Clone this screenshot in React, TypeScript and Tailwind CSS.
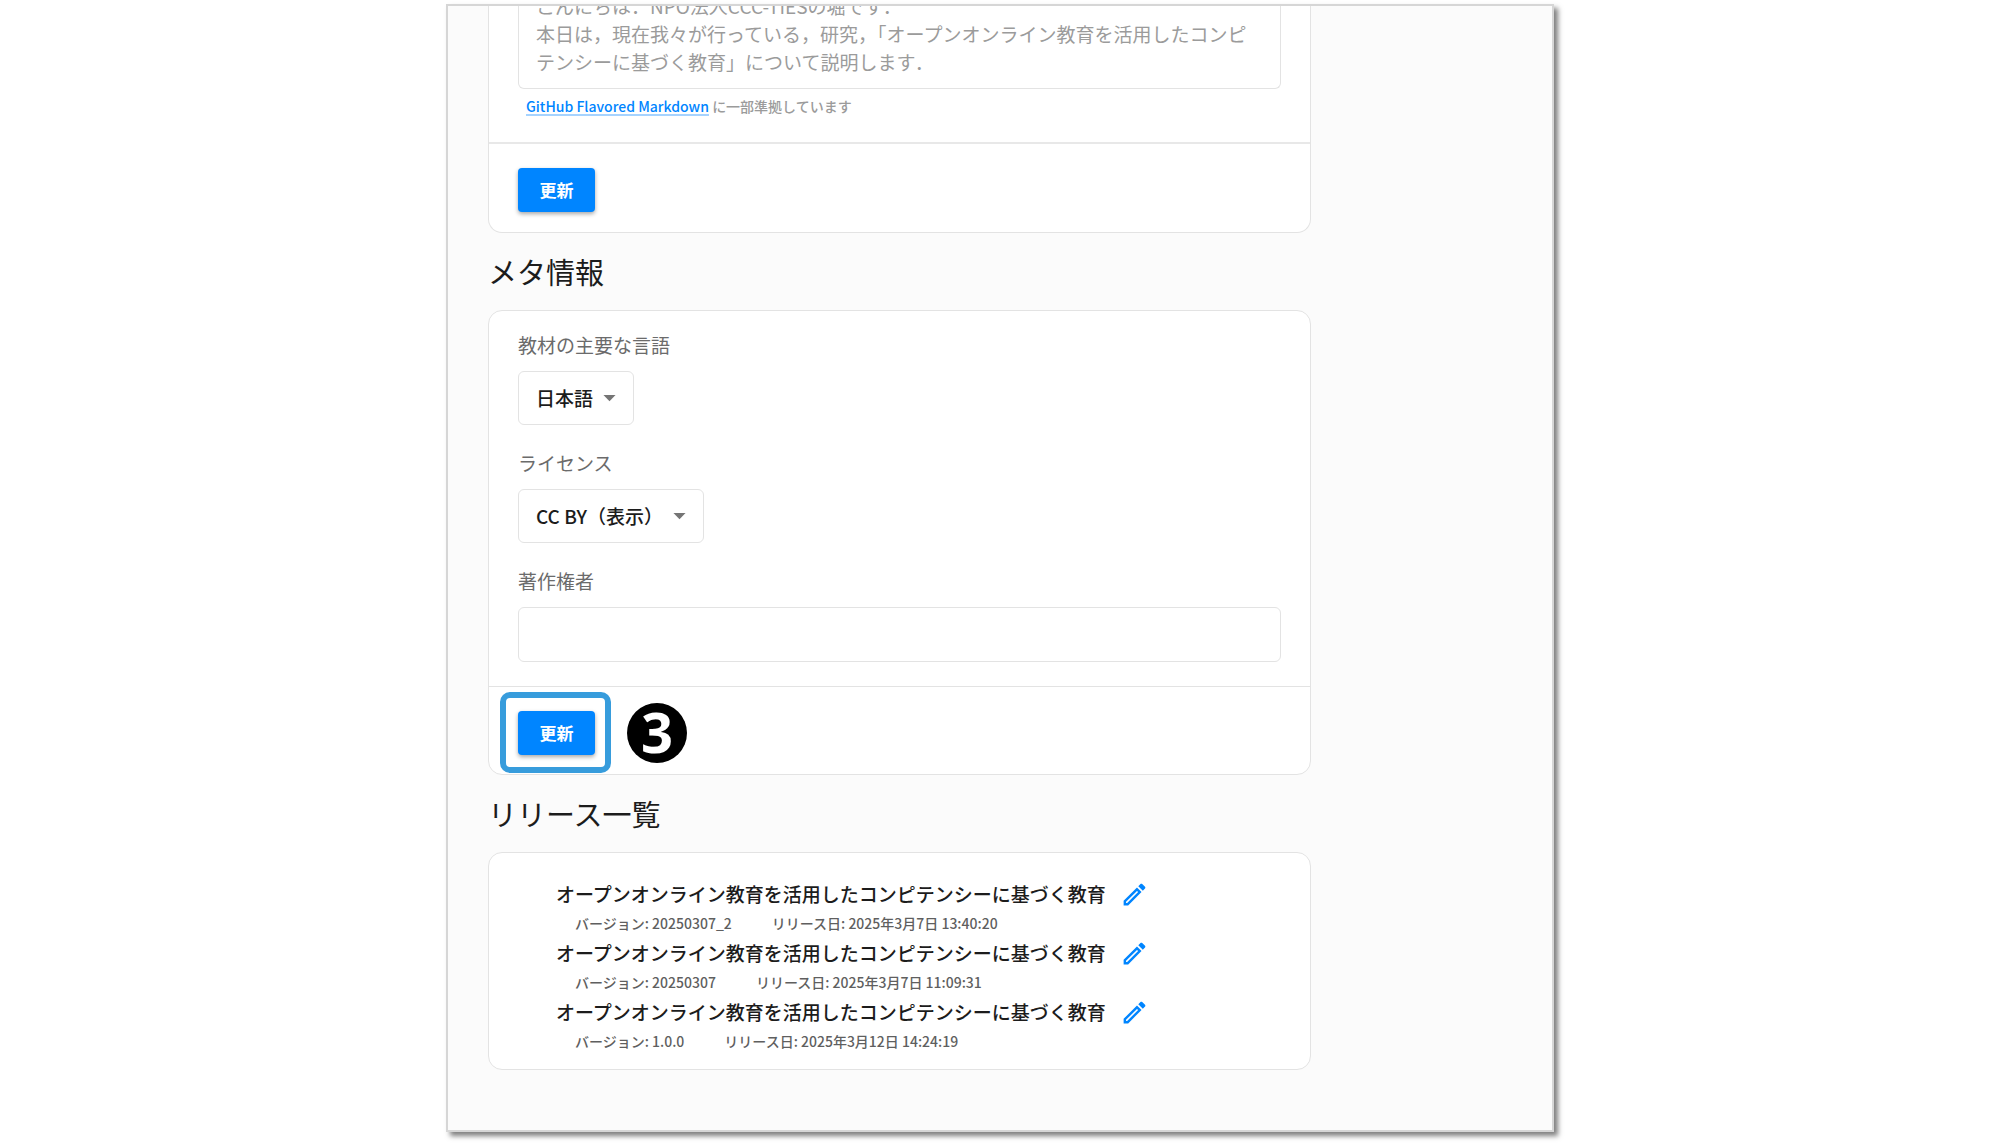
import React, { useId, useState } from 'react';

interface Release {
  title: string;
  version: string;
  date: string;
}

const releases: Release[] = [
  { title: 'オープンオンライン教育を活用したコンピテンシーに基づく教育', version: '20250307_2', date: '2025年3月7日 13:40:20' },
  { title: 'オープンオンライン教育を活用したコンピテンシーに基づく教育', version: '20250307', date: '2025年3月7日 11:09:31' },
  { title: 'オープンオンライン教育を活用したコンピテンシーに基づく教育', version: '1.0.0', date: '2025年3月12日 14:24:19' },
];

const initialDescription =
  'こんにちは．NPO法人CCC-TIESの堀です．\n本日は，現在我々が行っている，研究，「オープンオンライン教育を活用したコンピテンシーに基づく教育」について説明します．';

const UpdateButton: React.FC = () => (
  <button
    type="submit"
    className="h-11 w-[77px] rounded-[4px] bg-[#0085ff] text-[17px] leading-6 font-bold text-white shadow-[0_2px_4px_rgba(0,0,0,0.35)] hover:bg-[#0074df]"
  >
    更新
  </button>
);

const EditIcon: React.FC = () => (
  <svg viewBox="0 0 24 24" className="size-[29px]" fill="currentColor" aria-hidden="true">
    <path d="m14.06 9.02.92.92L5.92 19H5v-.92l9.06-9.06M17.66 3c-.25 0-.51.1-.7.29l-1.83 1.83 3.75 3.75 1.83-1.83c.39-.39.39-1.02 0-1.41l-2.34-2.34c-.2-.2-.45-.29-.71-.29zm-3.6 3.19L3 17.25V21h3.75L17.81 9.94l-3.75-3.75z" />
  </svg>
);

interface SelectFieldProps {
  label: string;
  options: string[];
}

const SelectField: React.FC<SelectFieldProps> = ({ label, options }) => {
  const id = useId();
  const [value, setValue] = useState(options[0]);

  return (
    <div className="flex flex-col items-start gap-3">
      <label htmlFor={id} className="text-[19px] leading-7 text-[#6b6b6b]">{label}</label>
      <div className="relative">
        <select
          id={id}
          value={value}
          onChange={(e) => setValue(e.target.value)}
          className="h-[54px] appearance-none rounded-md border border-[#e3e3e3] bg-white pr-[39px] pl-[17px] text-[19px] font-medium text-[#1c1c1c]"
        >
          {options.map((option) => (
            <option key={option}>{option}</option>
          ))}
        </select>
        <svg viewBox="0 0 24 24" className="pointer-events-none absolute top-3 right-[10px] size-[29px] text-[#757575]" fill="currentColor" aria-hidden="true">
          <path d="m7 10 5 5 5-5z" />
        </svg>
      </div>
    </div>
  );
};

const App: React.FC = () => {
  const [description, setDescription] = useState(initialDescription);
  const [holder, setHolder] = useState('');

  return (
    <div className="bg-white pt-1 pb-3 font-['Noto_Sans_CJK_JP',sans-serif]">
      <main className="mx-auto w-full max-w-[1108px] overflow-hidden border-2 border-[#d6d6d6] bg-[#fbfbfb] px-10 pb-[60px] shadow-[4px_4px_5px_rgba(0,0,0,0.5)]">
        <div className="max-w-[823px]">

          {/* Description */}
          <form onSubmit={(e) => e.preventDefault()} className="rounded-b-[14px] border border-t-0 border-[#e3e3e3] bg-white">
            <div className="px-[29px] pb-6">
              <textarea
                aria-label="解説"
                value={description}
                onChange={(e) => setDescription(e.target.value)}
                className="-mt-[14px] block h-[97px] w-full resize-none overflow-hidden rounded-b-md border border-t-0 border-[#e3e3e3] px-[17px] text-[19px] leading-7 text-[#9b9b9b]"
              />
              <p className="mt-[5px] px-2 text-[14px] leading-6 font-medium text-[#9b9b9b]">
                <a href="https://github.github.com/gfm/" className="text-[#0085ff] underline decoration-[#a6d3ff] decoration-2 underline-offset-2">GitHub Flavored Markdown</a>
                {' '}に一部準拠しています
              </p>
            </div>
            <div className="border-t-2 border-[#e8e8e8] px-[29px] pt-6 pb-5">
              <UpdateButton />
            </div>
          </form>

          {/* Metadata */}
          <h2 className="py-5 text-[29px] leading-[37px] text-[#1c1c1c]">メタ情報</h2>
          <form onSubmit={(e) => e.preventDefault()} className="rounded-[14px] border border-[#e3e3e3] bg-white">
            <div className="flex flex-col gap-6 px-[29px] pt-5 pb-6">
              <SelectField label="教材の主要な言語" options={['日本語']} />
              <SelectField label="ライセンス" options={['CC BY（表示）']} />
              <div className="flex flex-col gap-3">
                <label htmlFor="holder" className="text-[19px] leading-7 text-[#6b6b6b]">著作権者</label>
                <input
                  id="holder"
                  type="text"
                  value={holder}
                  onChange={(e) => setHolder(e.target.value)}
                  className="h-[55px] w-full rounded-md border border-[#e3e3e3] px-[17px] text-[19px]"
                />
              </div>
            </div>
            <div className="flex items-center gap-4 border-t border-[#e3e3e3] px-[11px] pt-[5px] pb-px">
              <div className="flex rounded-[10px] border-6 border-[#379cdc] pt-[13px] pr-[10px] pb-3 pl-3">
                <UpdateButton />
              </div>
              <span className="flex size-[60px] items-center justify-center rounded-full bg-black pb-1 font-['Noto_Sans',sans-serif] text-[56px] leading-[56px] font-bold text-white">3</span>
            </div>
          </form>

          {/* Releases */}
          <h2 className="py-5 text-[29px] leading-[37px] text-[#1c1c1c]">リリース一覧</h2>
          <ul className="rounded-[14px] border border-[#e3e3e3] bg-white px-[67px] pt-[25px] pb-[14px]">
            {releases.map((release) => (
              <li key={release.version}>
                <div className="flex h-8 items-center gap-[14px] text-[19px] font-medium text-[#1c1c1c]">
                  {release.title}
                  <button type="button" aria-label="編集" className="text-[#0085ff]">
                    <EditIcon />
                  </button>
                </div>
                <div className="flex gap-10 px-[19px] text-[14px] leading-[27px] font-medium text-[#5f5f5f]">
                  <span>バージョン: {release.version}</span>
                  <span>リリース日: {release.date}</span>
                </div>
              </li>
            ))}
          </ul>
        </div>
      </main>
    </div>
  );
};

export default App;
